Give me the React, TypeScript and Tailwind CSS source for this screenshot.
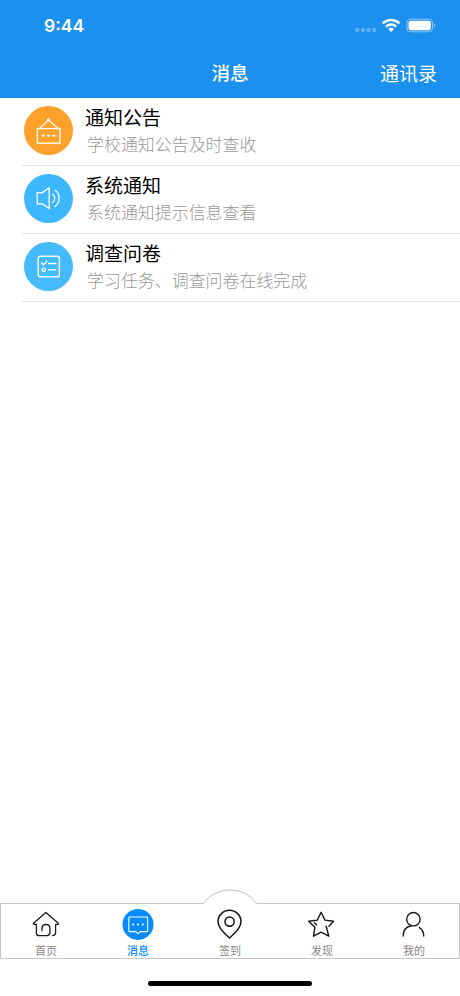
import type { ReactNode } from 'react';

const Announcement = () => (
  <svg width="49" height="49" viewBox="0 0 49 49" fill="none" stroke="#fff" strokeWidth="1.3">
    <circle cx="24.5" cy="24.5" r="24.5" fill="#ffa22b" stroke="none" />
    <rect x="13.4" y="22.6" width="22.6" height="14.6" />
    <path d="M15.4 22.4 24.5 14l9.6 8.4" />
    <circle cx="24.5" cy="13.9" r="1.6" fill="#fff" stroke="none" />
    <g fill="#fff" stroke="none">
      <circle cx="19.2" cy="29.6" r="1.4" />
      <circle cx="24.5" cy="29.6" r="1.4" />
      <circle cx="29.8" cy="29.6" r="1.4" />
    </g>
  </svg>
);

const Speaker = () => (
  <svg width="49" height="49" viewBox="0 0 49 49" fill="none" stroke="#fff" strokeWidth="1.3" strokeLinejoin="round" strokeLinecap="round">
    <circle cx="24.5" cy="24.5" r="24.5" fill="#3db7ff" stroke="none" />
    <path d="M13.2 18.6h5.2l6.8-4.8v20.8l-6.8-4.8h-5.2z" />
    <path d="M28.6 20.2c2.8 2 2.8 6.4 0 8.4" />
    <path d="M31 16.2c5.4 3.4 5.4 12.8 0 16.2" />
  </svg>
);

const Survey = () => (
  <svg width="49" height="49" viewBox="0 0 49 49" fill="none" stroke="#fff" strokeWidth="1.4" strokeLinejoin="round" strokeLinecap="round">
    <circle cx="24.5" cy="24.5" r="24.5" fill="#45baff" stroke="none" />
    <rect x="14.2" y="14.2" width="21.2" height="20.6" rx="2.4" />
    <path d="m17.6 21 1.9 2 3.3-3.8M24.6 21.5h7.2M24.6 27.8h7.2" />
    <circle cx="19.7" cy="27.8" r="1.7" />
  </svg>
);

const Home = () => (
  <svg width="32" height="32" viewBox="0 0 32 32" fill="none" stroke="#1c1c1c" strokeWidth="1.3" strokeLinejoin="round" strokeLinecap="round">
    <path d="M6.4 16.3H4.1c-.7 0-.9-.7-.3-1.2L15.9 4.5l12.2 10.6c.6.5.4 1.2-.3 1.2h-2.2v8.5c0 1.8-1 2.8-3 2.8" />
    <path d="M6.4 16.3v8.6c0 1.8.9 2.7 2.7 2.7h7.7c2 0 3.1-1.1 3.1-3v-4.1c0-2.5-1.4-4-3.9-4s-4 1.5-4 4v2.3" />
  </svg>
);

const Chat = () => (
  <svg width="32" height="32" viewBox="0 0 32 32" fill="none" stroke="#fff" strokeWidth="1.1" strokeLinejoin="round">
    <circle cx="16" cy="16.4" r="15.5" fill="#078cff" stroke="none" />
    <path d="M7.6 9h17.2a.8.8 0 0 1 .8.8v13a.8.8 0 0 1-.8.8h-6.6L16 25.7l-2.2-2.1H7.6a.8.8 0 0 1-.8-.8v-13a.8.8 0 0 1 .8-.8z" />
    <g fill="#fff" stroke="none">
      <circle cx="11.2" cy="16.5" r="1" />
      <circle cx="16" cy="16.5" r="1" />
      <circle cx="20.8" cy="16.5" r="1" />
    </g>
  </svg>
);

const Pin = () => (
  <svg width="32" height="32" viewBox="0 0 32 32" fill="none" stroke="#111" strokeWidth="1.5" strokeLinejoin="round">
    <path d="M15.5 30C13.8 28.5 4 21 4 13.6a11.5 11.3 0 0 1 23 0C27 21 17.2 28.5 15.5 30z" />
    <circle cx="15.6" cy="13.6" r="4.6" />
  </svg>
);

const Star = () => (
  <svg width="32" height="32" viewBox="0 0 32 32" fill="none" stroke="#161616" strokeWidth="1.4" strokeLinejoin="round" strokeLinecap="round">
    <path d="m23 18.2 4.5-4.9-8.5-1.2-3.9-7.8-3.8 7.8-8.6 1.2 6.2 6-1.4 8.9 7.7-4.1 7.6 4.1-2.6-10" />
    <path d="m8.4 14.8 2.2 2.3" />
  </svg>
);

const Person = () => (
  <svg width="32" height="32" viewBox="0 0 32 32" fill="none" stroke="#1c1c1c" strokeWidth="1.4" strokeLinecap="round">
    <circle cx="15.4" cy="11.2" r="6.7" />
    <path d="M5.2 28c0-6 3.4-9.3 8-10.2M21.3 19.6c2.7 1.6 4.3 4.4 4.5 8.4" />
  </svg>
);

const messages: { title: string; detail: string; icon: ReactNode }[] = [
  { title: '通知公告', detail: '学校通知公告及时查收', icon: <Announcement /> },
  { title: '系统通知', detail: '系统通知提示信息查看', icon: <Speaker /> },
  { title: '调查问卷', detail: '学习任务、调查问卷在线完成', icon: <Survey /> },
];

const tabs: { label: string; icon: ReactNode; active?: boolean }[] = [
  { label: '首页', icon: <Home /> },
  { label: '消息', icon: <Chat />, active: true },
  { label: '签到', icon: <Pin /> },
  { label: '发现', icon: <Star /> },
  { label: '我的', icon: <Person /> },
];

export default function App() {
  return (
    <div className="flex h-[996px] w-[460px] flex-col overflow-hidden bg-white font-['Liberation_Sans','Noto_Sans_CJK_SC',sans-serif]">
      <header className="h-[98px] shrink-0 bg-[#1b90ee] text-white">
        <div className="flex h-[50px] items-center justify-between pr-[24px] pl-[44px]">
          <span className="pt-[2px] font-['Inter',sans-serif] text-[17.5px] leading-none font-semibold">9:44</span>
          <svg width="81" height="20" viewBox="0 0 81 20" fill="none">
            <g fill="#fff" fillOpacity=".3">
              <rect x="0.3" y="13" width="4" height="4" rx="1.3" />
              <rect x="6" y="13" width="4" height="4" rx="1.3" />
              <rect x="11.6" y="13" width="4" height="4" rx="1.3" />
              <rect x="17.2" y="13" width="4" height="4" rx="1.3" />
            </g>
            <g stroke="#fff" strokeWidth="2.5">
              <path d="M27.8 8.3a12 12 0 0 1 16.6 0" />
              <path d="M31 11.7a7.3 7.3 0 0 1 10.2 0" />
            </g>
            <path d="M33.2 14.1a4.4 4.4 0 0 1 5.8 0l-2.9 3z" fill="#fff" />
            <rect x="51.9" y="4.2" width="25.6" height="12.6" rx="3.8" stroke="#fff" strokeOpacity=".5" />
            <rect x="53.5" y="5.8" width="22.4" height="9.4" rx="2.4" fill="#fff" />
            <path d="M78.8 8.6c1.6.6 1.6 3.5 0 4.1z" fill="#fff" fillOpacity=".55" />
          </svg>
        </div>
        <div className="grid h-[48px] grid-cols-3 items-center px-[23px] pt-px text-[19px] leading-none">
          <h1 className="col-start-2 text-center text-[18.6px] font-medium">消息</h1>
          <span className="text-right">通讯录</span>
        </div>
      </header>

      <main className="flex-1">
        {messages.map((m) => (
          <div key={m.title} className="ml-[22px] flex h-[68px] border-b border-[#e3e3e3] pt-[8px] pl-[2px]">
            {m.icon}
            <div className="ml-[12px] pt-px">
              <div className="h-[25px] text-[19px] leading-[24px] text-black">{m.title}</div>
              <div className="ml-[2px] h-[28px] text-[16.95px] leading-[28px] font-light text-[#989898]">{m.detail}</div>
            </div>
          </div>
        ))}
      </main>

      <footer className="relative h-[93px] shrink-0">
        <nav className="h-[56px] border border-[#c6c6c6]">
          <div className="-mx-px grid grid-cols-5">
            {tabs.map((t) => (
              <div key={t.label} className="flex flex-col items-center pt-[4px]">
                <div className="z-10">{t.icon}</div>
                <span className={t.active ? 'pt-px text-[11px] leading-[20px] font-medium text-[#078cff]' : 'pt-px text-[11px] leading-[20px] text-[#858585]'}>
                  {t.label}
                </span>
              </div>
            ))}
          </div>
        </nav>
        <svg className="absolute top-[-14px] left-[202px]" width="56" height="18" viewBox="0 0 56 18">
          <path d="M0 14.5h1.5C14-3.5 42-3.5 54.5 14.5H56V18H0z" fill="#fff" />
          <path d="M0 14.5h1.5C14-3.5 42-3.5 54.5 14.5H56" fill="none" stroke="#bdbdbd" />
        </svg>
        <div className="mx-auto mt-[22px] h-[5px] w-[164px] rounded-full bg-black" />
      </footer>
    </div>
  );
}
